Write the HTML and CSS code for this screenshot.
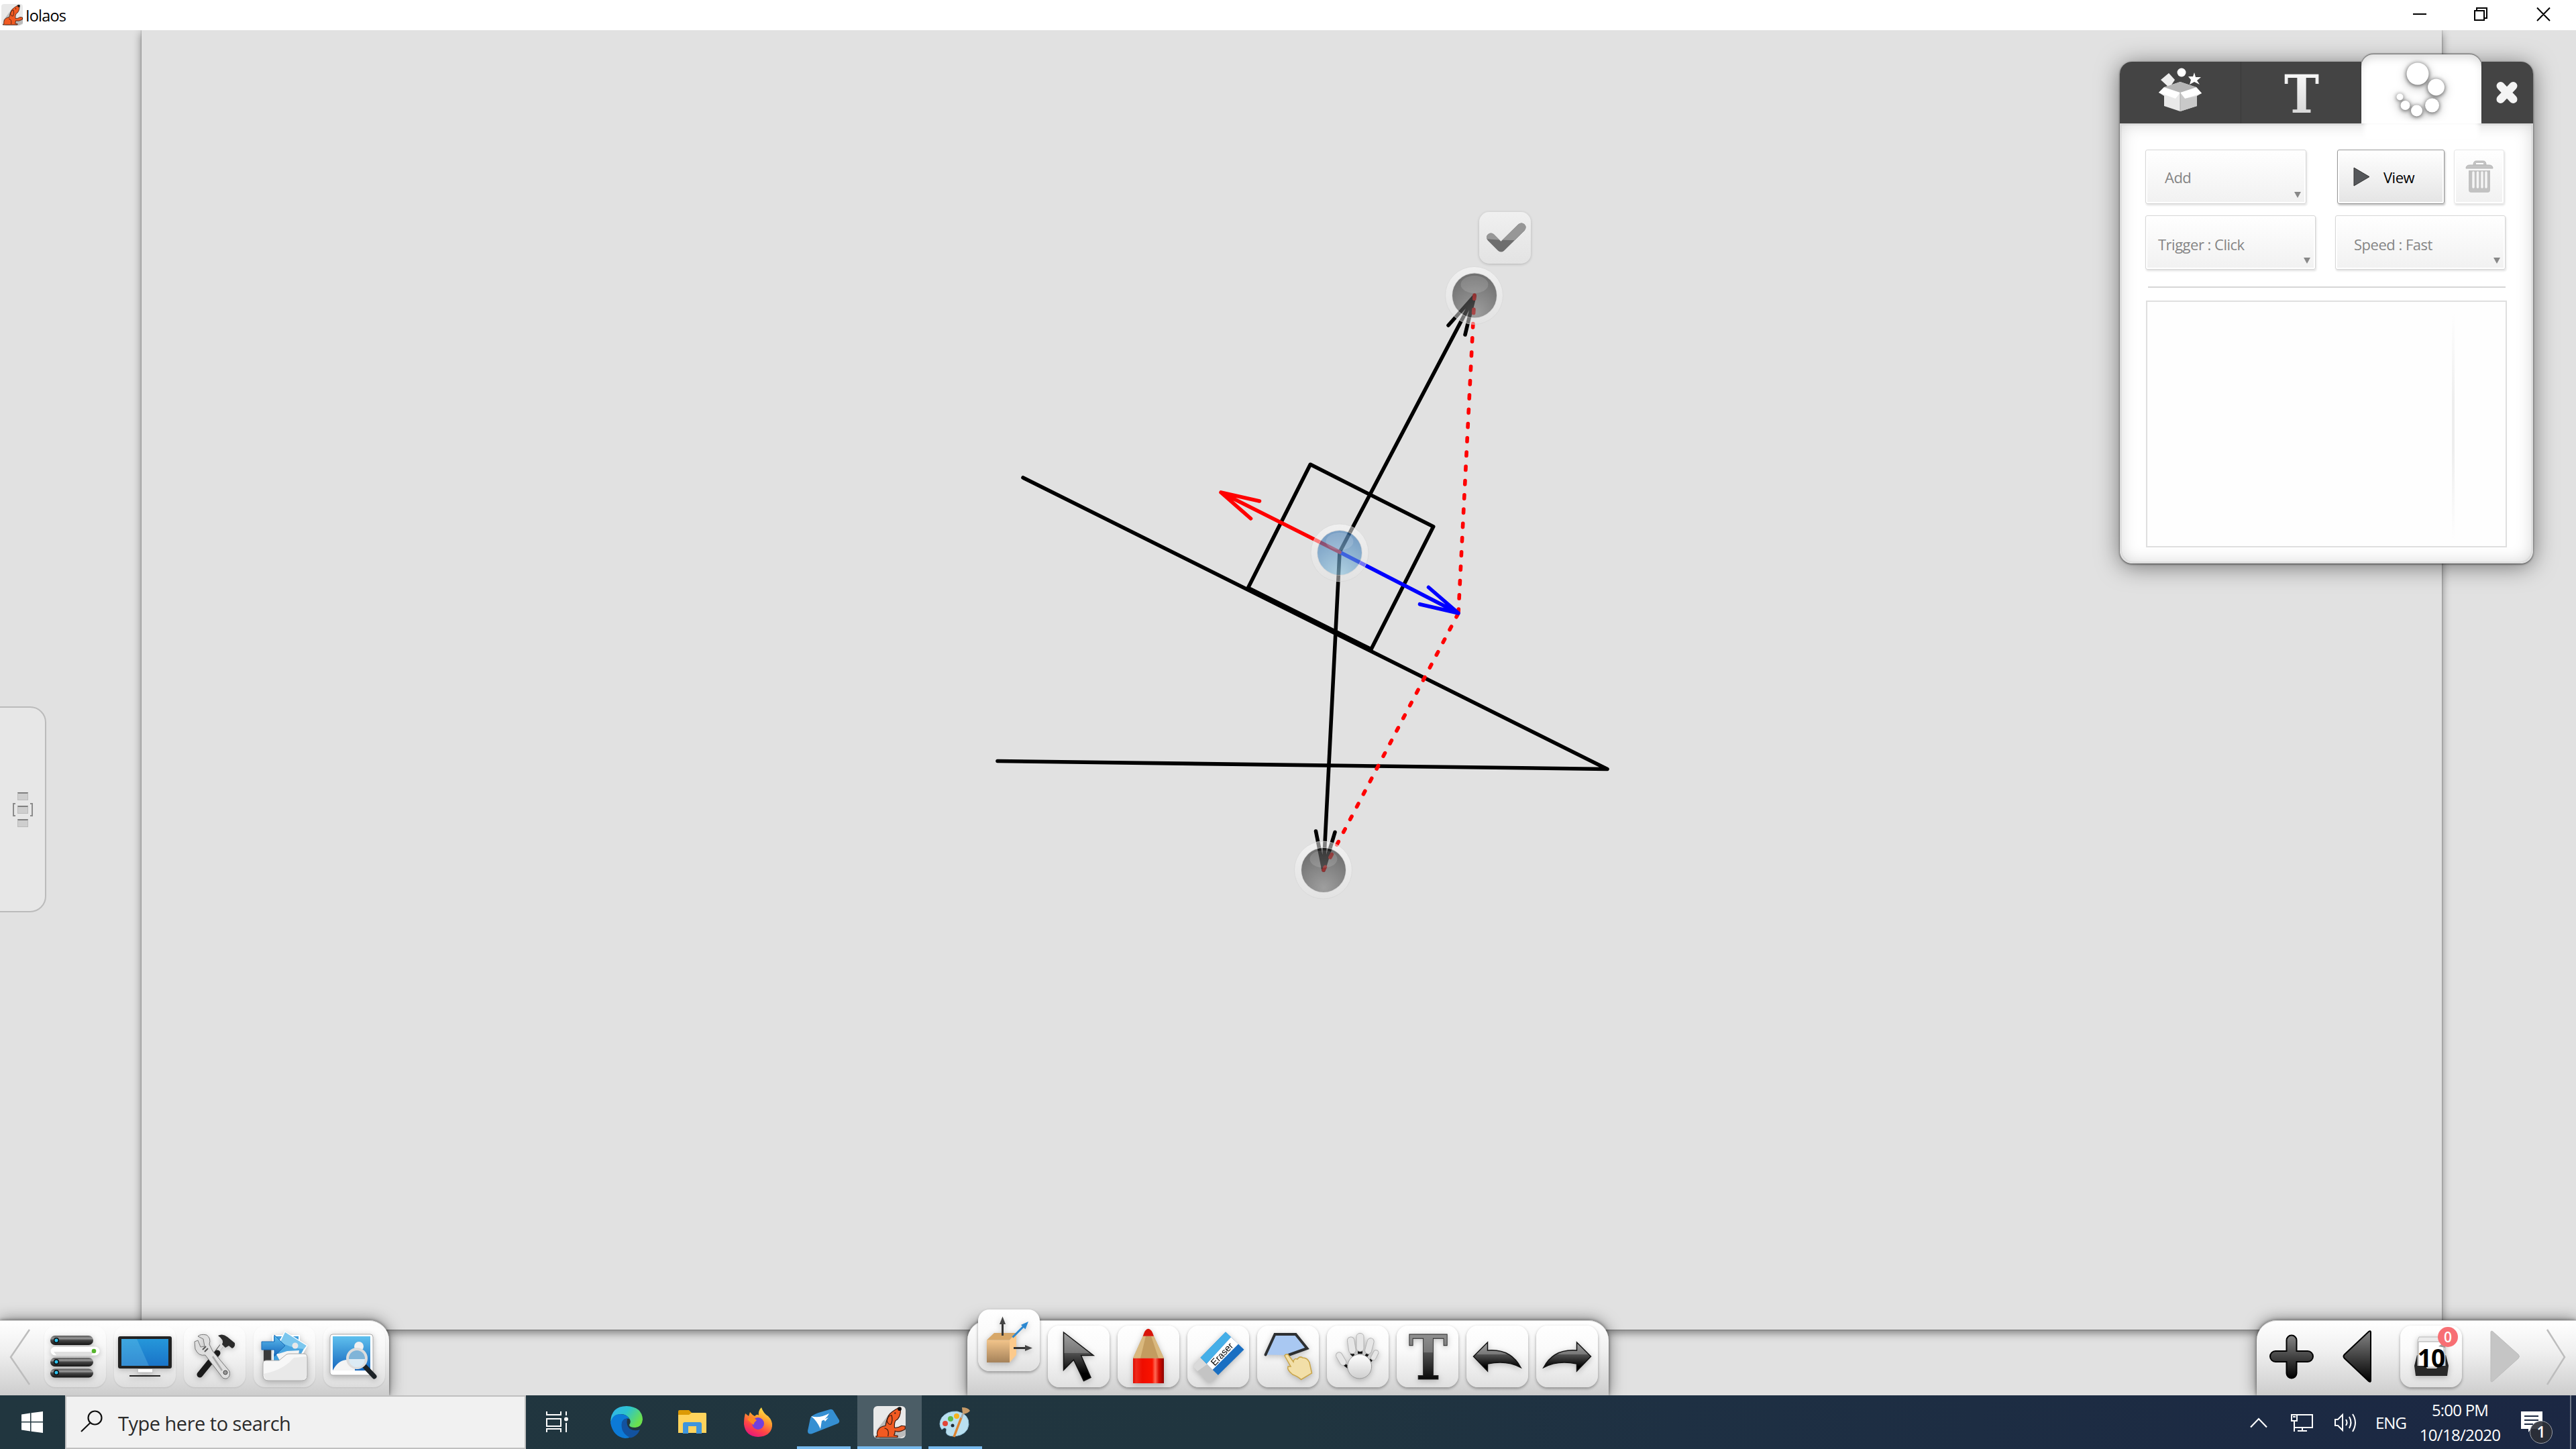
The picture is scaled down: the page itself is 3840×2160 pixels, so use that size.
FILE: index.html
```html
<!DOCTYPE html>
<html lang="en">
<head>
  <meta charset="UTF-8" />
  <title>Iolaos</title>
  <link rel="stylesheet" href="styles.css">
</head>
<body>
  <!-- shared gradients and symbols -->
  <svg class="defs" width="0" height="0">
    <defs>
      <linearGradient id="dark" x1="0" y1="0" x2="0" y2="1">
        <stop offset="0" stop-color="#858585" /><stop offset="1" stop-color="#000" />
      </linearGradient>
      <linearGradient id="gloss" x1="0" y1="0" x2="0" y2="1">
        <stop offset="0" stop-color="#a0a0a0" /><stop offset=".42" stop-color="#777" /><stop offset=".43" stop-color="#505050" /><stop offset=".85" stop-color="#000" />
      </linearGradient>
      <linearGradient id="bar" x1="0" y1="0" x2="0" y2="1">
        <stop offset="0" stop-color="#555" /><stop offset=".3" stop-color="#999" /><stop offset=".5" stop-color="#444" /><stop offset="1" stop-color="#151515" />
      </linearGradient>
      <linearGradient id="silver" x1="0" y1="0" x2="0" y2="1">
        <stop offset="0" stop-color="#fff" /><stop offset="1" stop-color="#cfcfcf" />
      </linearGradient>
      <linearGradient id="blue" x1="0" y1="0" x2="0" y2="1">
        <stop offset="0" stop-color="#5fc0ee" /><stop offset="1" stop-color="#1566bd" />
      </linearGradient>
      <linearGradient id="screen" x1="0" y1="0" x2="0" y2="1">
        <stop offset="0" stop-color="#2597da" /><stop offset="1" stop-color="#1a74c8" />
      </linearGradient>
      <linearGradient id="red" x1="0" y1="0" x2="1" y2="0">
        <stop offset="0" stop-color="#e00b00" /><stop offset=".1" stop-color="#ee2a1c" /><stop offset=".3" stop-color="#ee0d00" /><stop offset=".62" stop-color="#fa1300" /><stop offset=".72" stop-color="#ff6a55" /><stop offset=".84" stop-color="#d80a00" /><stop offset="1" stop-color="#8d0500" />
      </linearGradient>
      <linearGradient id="wood" x1="0" y1="0" x2="0" y2="1">
        <stop offset="0" stop-color="#f2c48a" /><stop offset="1" stop-color="#a5825a" />
      </linearGradient>
      <linearGradient id="ring" x1="0" y1="0" x2="0" y2="1">
        <stop offset="0" stop-color="#fff" stop-opacity=".5" /><stop offset="1" stop-color="#e4e4e4" stop-opacity=".5" />
      </linearGradient>
      <radialGradient id="knobGrey" cx=".5" cy=".9" r=".8">
        <stop offset="0" stop-color="#767676" /><stop offset="1" stop-color="#2e2e2e" />
      </radialGradient>
      <radialGradient id="knobBlue" cx=".5" cy="1" r=".9">
        <stop offset="0" stop-color="#92c8e2" /><stop offset="1" stop-color="#3b78b4" />
      </radialGradient>
      <linearGradient id="edgeTop" x1="0" y1="0" x2="1" y2=".5">
        <stop offset="0" stop-color="#35b1ee" /><stop offset=".5" stop-color="#2cc3cf" /><stop offset="1" stop-color="#6be04d" />
      </linearGradient>
      <linearGradient id="fox" x1=".8" y1="0" x2=".3" y2="1">
        <stop offset="0" stop-color="#fff04a" /><stop offset=".4" stop-color="#ff9a2e" /><stop offset=".7" stop-color="#ff4545" /><stop offset="1" stop-color="#e3157d" />
      </linearGradient>
      <symbol id="dog" viewBox="0 0 32 32">
        <rect width="32" height="32" rx="4" fill="#e9e9e9" />
        <path d="M3 24L17 6L12 19L28 25L32 21V29L26 32H6Z" fill="#bbb" />
        <path d="M2.500 31H24V29.500L20.500 29Q21.500 27 21.500 24.800Q26 26.500 31.500 23V20L28 19.500Q24 22 21 21.500Q20.500 17 22 14.500Q27 12 27 3.500L24.500 2Q17 6 15 9.500Q12.500 15 12 19.500Q6 20.500 4.500 24Q3 27 4 29.500L2.500 30Z" fill="#f15a22" stroke="#3a1a10" stroke-width=".8" />
        <path d="M18 9Q14 9.500 13.500 15Q15 19 17.500 18Q19.500 14 18 9M11 22Q16 22.500 14.500 30" fill="none" stroke="#3a1a10" stroke-width=".8" />
        <circle cx="26" cy="2.800" r="1.900" fill="#111" /><circle cx="21.500" cy="7" r=".7" fill="#111" />
      </symbol>
    </defs>
  </svg>

  <header class="titlebar">
    <svg class="app-icon" width="32" height="32"><use href="#dog" /></svg>
    <span class="app-name">Iolaos</span>
    <svg class="window-controls" width="250" height="45" viewBox="3590 0 250 45">
      <path d="M3597 21H3617M3692 15V12H3707V27H3703M3689 16H3703V30H3689ZM3782 11.500L3801 31M3801 11.500L3782 31" fill="none" stroke="#000" stroke-width="2" />
    </svg>
  </header>

  <main class="workspace">
    <div class="sheet"></div>

    <svg class="drawing" width="3840" height="2035" viewBox="0 45 3840 2035">
      <g class="ink">
        <path d="M1525 712L2396 1146.500L1487 1134.500" />
        <path d="M1953.300 692.300L2136.700 785L2044 967.800L1860.500 876.300Z" />
        <path d="M1997 823L2198 441M2159 485L2198 441L2184 499" />
        <path d="M1997 823L1973 1297M1961.500 1239L1973 1297L1990 1240.500" />
        <path class="dotted" d="M2198 440L2174 914" />
        <path class="dotted" d="M1973 1297L2174 914" />
        <path class="blue-arrow" d="M1997 823L2174 914M2129.500 875.500L2174 914L2116.500 900.700" />
        <path class="red-arrow" d="M1997 823L1820 734M1877.500 747L1820 734L1864.500 773" />
      </g>
      <g id="knob-top">
        <path d="M2154.500 440.500a43 43 0 1 0 86 0a43 43 0 1 0 -86 0ZM2164.500 440.500a33.500 33.500 0 1 1 67 0a33.500 33.500 0 1 1 -67 0Z" fill="url(#ring)" fill-rule="evenodd" stroke="#d6d6d6" stroke-width=".7" />
        <circle cx="2198" cy="440.500" r="33" fill="url(#knobGrey)" opacity=".62" />
        <ellipse cx="2198" cy="424" rx="20.500" ry="13" fill="#fff" opacity=".14" />
      </g>
      <use href="#knob-top" x="-225" y="856.500" />
      <path d="M1954 824a43 43 0 1 0 86 0a43 43 0 1 0 -86 0ZM1963.500 824a33.500 33.500 0 1 1 67 0a33.500 33.500 0 1 1 -67 0Z" fill="url(#ring)" fill-rule="evenodd" stroke="#d6d6d6" stroke-width=".7" />
      <circle cx="1997" cy="824" r="33" fill="url(#knobBlue)" opacity=".62" />
      <ellipse cx="1997" cy="807" rx="20.500" ry="13" fill="#fff" opacity=".14" />
    </svg>

    <div class="confirm">
      <svg width="77" height="77">
        <defs><clipPath id="checkTop"><path d="M0 0H77V42H46Q25 42 0 39Z" /></clipPath></defs>
        <path d="M17.500 38L32.500 53L63 23" fill="none" stroke="#6e6e6e" stroke-width="13" stroke-linecap="round" stroke-linejoin="round" />
        <path d="M17.500 38L32.500 53L63 23" fill="none" stroke="#979797" stroke-width="13" stroke-linecap="round" stroke-linejoin="round" clip-path="url(#checkTop)" />
      </svg>
    </div>

    <aside class="drawer">
      <span class="bracket bracket-left"></span>
      <div class="dots"><i></i><i></i><i></i></div>
      <span class="bracket bracket-right"></span>
    </aside>

    <section class="panel">
      <div class="tabs">
        <div class="tab">
          <svg width="180" height="92" viewBox="3160 92 180 92">
            <circle cx="3252" cy="108" r="6.500" fill="#fff" />
            <path d="M3233 109L3242 119L3234 131L3221 119Z" fill="#eee" />
            <path d="M3271 108L3273 115L3281 115L3275 120L3279 126L3271 122L3264 126L3266 119L3262 114L3269 114Z" fill="#fff" />
            <path d="M3250 122L3274 130L3282 139L3275 143V158L3250 166L3226 158V143L3218 138L3226 130Z" fill="#e9e9e9" />
            <path d="M3250 138L3274 130L3282 139L3257 147ZM3250 138L3226 130L3218 138L3243 147Z" fill="#fff" />
            <path d="M3226 130L3250 122L3274 130L3250 138Z" fill="#b5b5b5" />
            <path d="M3250 138L3257 147L3275 143V158L3250 166Z" fill="#c9c9c9" />
            <path d="M3250 138V166" stroke="#aaa" />
          </svg>
        </div>
        <div class="tab tab-text">
          <svg width="180" height="92" viewBox="3340 92 180 92">
            <text class="slab" x="3405" y="168" font-size="79" textLength="52" lengthAdjust="spacingAndGlyphs" fill="url(#silver)">T</text>
          </svg>
        </div>
        <div class="tab tab-active">
          <svg width="179" height="103" viewBox="3520 81 179 103" fill="#fff">
            <g class="bubbles">
              <circle cx="3604" cy="110" r="16.500" /><circle cx="3631.500" cy="130" r="12.500" /><circle cx="3625.500" cy="157" r="10.500" />
              <circle cx="3602.500" cy="165" r="8.500" /><circle cx="3585.500" cy="157" r="7" /><circle cx="3577.500" cy="144.500" r="5" />
            </g>
          </svg>
        </div>
        <div class="tab tab-close">
          <svg width="77" height="92" viewBox="3699 92 77 92">
            <path d="M3727.500 128L3746.500 148M3746.500 128L3727.500 148" stroke="#f4f4f4" stroke-width="12" stroke-linecap="round" />
          </svg>
        </div>
      </div>
      <div class="panel-body">
        <div class="row">
          <div class="button button-add disabled">Add<i class="caret"></i></div>
          <div class="button button-view">
            <svg width="26" height="30"><path d="M1 1L24 14.500L1 28Z" fill="#55575a" stroke="#333" /></svg>
            View
          </div>
          <div class="button button-trash disabled">
            <svg width="42" height="50" viewBox="0 0 42 50">
              <path d="M1 12Q1 7 7 7H35Q41 7 41 12ZM12 7Q12 1 16 1H27Q31 1 31 7" fill="#c4c4c4" stroke="#b5b5b5" />
              <path d="M16 6V4H27V6Z" fill="#fff" />
              <path d="M5 15H37V44Q37 48 33 48H9Q5 48 5 44Z" fill="#c2c2c2" />
              <path d="M12 18V40M18.500 18V40M25 18V40M31 18V40" stroke="#f5f5f5" stroke-width="3.500" stroke-linecap="round" />
            </svg>
          </div>
        </div>
        <div class="row">
          <div class="button button-trigger disabled">Trigger : Click<i class="caret"></i></div>
          <div class="button button-speed disabled">Speed : Fast<i class="caret"></i></div>
        </div>
        <div class="rule"></div>
        <div class="list"><span class="list-divider"></span></div>
      </div>
    </section>

    <nav class="toolbar toolbar-left">
      <svg class="chevron" width="32" height="92"><path d="M30 6L2 47L30 88" fill="none" stroke="#bdbdbd" stroke-width="2.500" /></svg>
      <div class="tile tile-flat">
        <svg width="92" height="92">
          <g fill="url(#bar)">
            <rect x="9" y="15" width="64" height="14" rx="7" /><rect x="9" y="48" width="64" height="13" rx="6.500" /><rect x="9" y="64.500" width="64" height="13" rx="6.500" />
          </g>
          <rect x="9.500" y="31.500" width="73" height="13" rx="6.500" fill="#fff" />
          <path d="M14 39H74L70 44H18Z" fill="#e0e0e0" />
          <g fill="#2fc4f0" stroke="#0a0a0a" stroke-width="1.500"><circle cx="18" cy="22" r="3.300" /><circle cx="18" cy="54" r="3.300" /><circle cx="18" cy="70" r="3.300" /></g>
          <circle cx="74" cy="38" r="3.300" fill="#56b52c" />
        </svg>
      </div>
      <div class="tile tile-flat">
        <svg width="92" height="92">
          <rect x="6" y="16" width="80" height="48" rx="3" fill="#222" />
          <rect x="11" y="20" width="70" height="40" fill="url(#screen)" />
          <path d="M11 20H34L52 60H11Z" fill="#7fd0f0" opacity=".28" />
          <path d="M36 65H57V70H36Z" fill="#fff" /><path d="M35 70H58" stroke="#bbb" />
          <path d="M23 75H69" stroke="#222" stroke-width="2" />
        </svg>
      </div>
      <div class="tile tile-flat">
        <svg width="92" height="92">
          <path d="M56 30L23 74" stroke="#4a4a4a" stroke-width="6" />
          <path d="M60 25L50 39" stroke="#ddd" stroke-width="5" />
          <path d="M50 41L24 73" stroke="#1a1a1a" stroke-width="9" stroke-linecap="round" />
          <path d="M51 15Q58 11 65 17L76 26Q77 32 72 34L67 30L62 33L57 28Q61 22 51 15Z" fill="#2b2b2b" />
          <path d="M21 16Q25 12 34 14Q41 19 38 28L43 38L68 68Q70 76 64 79Q58 80 55 74L32 44Q22 46 17 35L16 24L21 22L25 32L31 31L29 20Z" fill="#dedede" stroke="#777" />
          <path d="M28 36L33 31M31 39L36 34" stroke="#555" stroke-width="2" />
          <path d="M43 46L57 67" stroke="#aaa" stroke-width="2.500" />
          <circle cx="62" cy="70" r="3" fill="#999" stroke="#444" />
        </svg>
      </div>
      <div class="tile tile-flat">
        <svg width="92" height="92">
          <path d="M15 33H26V56H15Z" fill="#3a3a3a" />
          <path d="M29 15H68V54H29Z" fill="#3f9ddc" stroke="#fff" stroke-width="2" />
          <path d="M47 10L79 30L64 57L30 40Z" fill="#4aa6e0" stroke="#fff" stroke-width="2.500" />
          <path d="M47 10L79 30L75 35Q52 33 40 24Z" fill="#7cc7ee" />
          <circle cx="62" cy="30" r="4.500" fill="#e8e8e8" /><path d="M34 43L50 38L68 37L66 50L40 54Z" fill="#f4f4f4" />
          <path d="M12 24H31V14L47 30L31 46V36H12Z" fill="url(#blue)" stroke="#1a6cb8" />
          <path d="M14 57Q14 52 19 52H38L49 43Q51 42 54 42H75Q80 42 80 48V74Q80 82 72 82H22Q15 82 14 75Z" fill="#f7f7f7" stroke="#a9a9a9" />
          <path d="M15 72Q45 66 60 48L79 46V74Q79 81 72 81H22Q16 81 15 72Z" fill="#e9e9e9" />
        </svg>
      </div>
      <div class="tile tile-flat">
        <svg width="92" height="92">
          <rect x="10" y="13" width="64" height="61" rx="4" fill="#fff" stroke="#aaa" />
          <rect x="14" y="16" width="56" height="51" fill="url(#blue)" />
          <path d="M14 67Q22 51 36 51L47 56V67Z" fill="#f4f4f4" /><circle cx="53" cy="31" r="7" fill="#f1f1f1" /><path d="M46 40H60V48H46Z" fill="#e6e6e6" />
          <path d="M61 60L76 76" stroke="#1c2226" stroke-width="7" stroke-linecap="round" />
          <circle cx="50" cy="49" r="14" fill="#7fb4d8" stroke="#ddd" stroke-width="4" />
          <path d="M38 50H62A12 12 0 0 1 38 50" fill="#dcebf4" />
        </svg>
      </div>
    </nav>

    <nav class="toolbar toolbar-center">
      <div class="tile tile-raised">
        <svg width="92" height="92">
          <path d="M13 45.500H47V79H13Z" fill="url(#wood)" /><path d="M13 45.500L24 35H57L47 45.500Z" fill="#d7a768" /><path d="M47 45.500L57 35V68L47 79Z" fill="#fcca8c" />
          <path d="M36.500 39V20" stroke="#333" stroke-width="3" /><path d="M36.500 10.500L41 22H32Z" fill="#444" />
          <path d="M53 57.500H72" stroke="#333" stroke-width="3" /><path d="M81 57.500L70 53V62Z" fill="#444" />
          <path d="M51.500 41.500L69 24" stroke="#2b87d0" stroke-width="3" /><path d="M75 18L70.500 29.500L64 23Z" fill="#2b87d0" />
        </svg>
      </div>
      <div class="tile">
        <svg width="92" height="92"><path d="M23.500 10L68 44.500H49.500L64 77.500L53.500 82.500L38.500 51L23.500 66.500Z" fill="url(#gloss)" stroke="#111" stroke-width="1.500" /></svg>
      </div>
      <div class="tile">
        <svg width="92" height="92">
          <path d="M23 48.500H69V86H23Z" fill="url(#red)" />
          <path d="M37.700 15.700H54L69 48.500H23Z" fill="#c39c60" /><path d="M37.700 15.700L23 48.500H34L42 15.700ZM54 15.700L69 48.500H61L50 15.700Z" fill="#d9b87e" />
          <path d="M37.700 15.700Q41 4.700 45.700 4.700T54 15.700Z" fill="#d8140a" />
        </svg>
      </div>
      <div class="tile">
        <svg width="92" height="92">
          <path d="M57 9.500L84.500 35.700L45.700 74L19.300 48Z" fill="#1a6fc2" /><path d="M57 9.500L65 17.300L28.700 56.700L19.300 48Z" fill="#45afe8" />
          <path d="M65 17.300L76 27.500L37.500 66L28.700 57Z" fill="#fff" />
          <path d="M19.300 48L45.700 74L36 83.500Q33 86 30 83.500L10 63Q8 60.500 10 58Z" fill="#c4c4c4" /><path d="M19.300 48L29 58L15 68L10 63Q8 60.500 10 58Z" fill="#dadada" />
          <text class="eraser-label" x="0" y="4.500" font-size="14" textLength="41" transform="translate(37.500 57.500) rotate(-46)">Eraser</text>
        </svg>
      </div>
      <div class="tile">
        <svg width="92" height="92">
          <path d="M12.500 43.500L26.500 13H57.500L74.500 34L46.500 44Z" fill="#a9c8f2" />
          <path d="M12.500 43.500L26.500 13H57.500L74.500 34L46.500 44" fill="none" stroke="#2d2f31" stroke-width="4" stroke-linecap="round" />
          <path d="M41 45Q42 42 46 43L54 54Q55 48 60 50Q63 45 68 48Q75 48 78 55L81.500 71L65.500 80.500Q61 76 53 73Q44 66 46 61L50 61Z" fill="#f2dfa8" stroke="#c9a548" stroke-width="1.500" />
        </svg>
      </div>
      <div class="tile">
        <svg width="92" height="92" class="glove">
          <path d="M26 58L34 64M36 41L40 45M46 40H53M61 42L58 46M67 50L63 55" stroke="#111" stroke-width="4" />
          <g fill="#e6e6e6" stroke="#b3b3b3">
            <rect x="44" y="11.500" width="11" height="27" rx="5" />
            <rect x="31.500" y="17" width="10.500" height="25" rx="5" transform="rotate(-9 36.700 29.500)" />
            <rect x="58.500" y="18.500" width="10" height="24" rx="5" transform="rotate(15 63.500 30)" />
            <rect x="67.500" y="36" width="7.500" height="16" rx="3.700" transform="rotate(27 71 44)" />
            <rect x="16.500" y="39" width="9.500" height="21" rx="4.700" transform="rotate(-30 21.300 49.700)" />
            <circle cx="48.700" cy="61" r="18" fill="url(#silver)" stroke="#999" />
          </g>
        </svg>
      </div>
      <div class="tile">
        <svg width="92" height="92"><text class="slab" x="18" y="80" font-size="91" textLength="58" lengthAdjust="spacingAndGlyphs" fill="url(#gloss)" stroke="#222">T</text></svg>
      </div>
      <div class="tile">
        <svg width="92" height="92"><path d="M10.500 46L31.500 25V37Q66 34 81 62.500Q60 51 31.500 57V68Z" fill="url(#gloss)" stroke="#111" stroke-width="1.500" /></svg>
      </div>
      <div class="tile">
        <svg width="92" height="92"><path d="M81.500 46L60.500 25V37Q26 34 11 62.500Q32 51 60.500 57V68Z" fill="url(#gloss)" stroke="#111" stroke-width="1.500" /></svg>
      </div>
    </nav>

    <nav class="toolbar toolbar-right">
      <svg width="68" height="92"><path d="M26.500 22a7.500 7.500 0 0 1 15 0V38H58a8 8 0 0 1 0 16H41.500V71a7.500 7.500 0 0 1 -15 0V54H10a8 8 0 0 1 0 -16H26.500Z" fill="url(#dark)" stroke="#000" stroke-width="2" /></svg>
      <svg class="prev" width="48" height="92"><path d="M43 10V82Q43 85 40 83L4 49Q1 46 4 43L40 9Q43 7 43 10Z" fill="url(#dark)" stroke="#000" stroke-width="2" /></svg>
      <div class="tile tile-pages">
        <svg width="92" height="92">
          <path d="M25 44L31 46V60H21ZM68 44L62 46V60H72Z" fill="#222" />
          <path d="M28 17H62L67 23V64H26V22Z" fill="#ececec" stroke="#bbb" /><path d="M27 24H65V62H27Z" fill="#fff" stroke="#aaa" />
          <path d="M57 31L67 24V33Z" fill="#999" />
          <path d="M21 60H37L40 64H54L57 60H72L70 75H23Z" fill="#292929" />
        </svg>
        <span class="page-number">10</span>
        <span class="page-badge">0</span>
      </div>
      <svg class="next" width="48" height="92"><path d="M2 10V82Q2 85 5 83L43 49Q46 46 43 43L5 9Q2 7 2 10Z" fill="#c5c5c5" stroke="#bbb" /></svg>
      <svg class="chevron-end" width="32" height="92"><path d="M2 6L28 47L2 88" fill="none" stroke="#bdbdbd" stroke-width="2.500" /></svg>
    </nav>
  </main>

  <footer class="taskbar">
    <div class="start">
      <svg width="32" height="32"><path d="M0 4.500L13 2.500V15H0ZM14.500 2.300L32 0V15H14.500ZM0 16.500H13V29.500L0 27.500ZM14.500 16.500H32V32L14.500 29.700Z" fill="#fff" /></svg>
    </div>
    <div class="search">
      <svg width="34" height="34"><circle cx="22.500" cy="11.500" r="10" fill="none" stroke="#111" stroke-width="2.200" /><path d="M15.500 19L2 32" stroke="#111" stroke-width="2.200" /></svg>
      <span>Type here to search</span>
    </div>
    <div class="task task-view">
      <svg width="34" height="32"><path d="M1 0V5H22V0M1 31V26H22V31M1 11H22V22H1ZM30 0V6M30 17V31" fill="none" stroke="#fff" stroke-width="2" /><circle cx="30" cy="11.500" r="3" fill="#fff" /></svg>
    </div>
    <div class="task">
      <svg width="48" height="48">
        <path d="M0 24Q1 0 24 0Q47 1 48 20Q47 31 37 32Q28 32 28 28Q31 24 29 20Q24 11 14 12Q5 13 0 24Z" fill="url(#edgeTop)" />
        <path d="M0 25Q3 12 14 12Q25 12 28 19Q20 17 17 25Q16 38 30 46Q27 48 22 48Q4 46 0 25Z" fill="#0c7ad6" />
        <path d="M17 24Q20 18 25 19Q23 29 29 34Q36 38 44 35Q40 45 30 47.500Q14 40 17 24Z" fill="#12529f" />
      </svg>
    </div>
    <div class="task">
      <svg width="42" height="36"><path d="M0 2Q0 0 2 0H16L20 4H40Q42 4 42 6V34H0Z" fill="#dc9a05" /><path d="M0 7H16L20 4H40Q42 4 42 6V34H0Z" fill="#ffd35c" /><path d="M7 35V21Q7 18 10 18H32Q35 18 35 21V35H27V24H15V35Z" fill="#3f95dc" /></svg>
    </div>
    <div class="task">
      <svg width="42" height="44">
        <path d="M2 9L7 13L9 7Q12 11 16 13Q20 9 22 12Q21 5 26 0Q29 9 36 13Q43 20 42 28Q40 43 21 44Q2 43 0 25Q0 15 2 9Z" fill="url(#fox)" />
        <circle cx="21" cy="24" r="9" fill="#7340dc" /><path d="M5 18Q10 11 19 19Q15 22 14 26Z" fill="#ff8a1f" />
      </svg>
    </div>
    <div class="task running">
      <svg width="50" height="40"><path d="M17 6L34 1Q38 0 40 4L48 17Q49 20 46 22L8 37Q1 39 1 33L5 14Q6 10 17 6Z" fill="#358fd2" /><path d="M6 11Q18 15 33 7Q28 16 22 18L20 30Q15 18 6 11ZM25 16L32 13L27 19Z" fill="#fff" /></svg>
    </div>
    <div class="task running active"><svg width="48" height="48"><use href="#dog" /></svg></div>
    <div class="task running">
      <svg width="48" height="46">
        <path d="M4 16Q12 6 27 7Q45 11 44 27Q42 42 23 44Q7 44 11 34Q9 29 4 34Q-2 26 4 16Z" fill="#b9dff0" stroke="#8dbcd4" />
        <circle cx="17" cy="18" r="4" fill="#5db848" /><circle cx="26" cy="14" r="4" fill="#f6b31e" /><circle cx="9" cy="25" r="4" fill="#e14538" /><circle cx="20" cy="28" r="2.500" fill="#1d2b36" />
        <path d="M22 45L33 16" stroke="#dc8330" stroke-width="3.500" /><path d="M33 17L36 9" stroke="#aaa" stroke-width="3" /><path d="M34 1Q43 1 46 6Q43 10 36 11Q34 7 34 1Z" fill="#c69a68" />
      </svg>
    </div>

    <div class="tray">
      <svg class="tray-up" width="26" height="16"><path d="M1 14.500L13 2L25 14.500" fill="none" stroke="#fff" stroke-width="2.200" /></svg>
      <svg class="tray-net" width="34" height="28"><path d="M9 2H32V21H6M1 2H9V11H1ZM3 5H7M5 11V27M10 26H24M17 21V26" fill="none" stroke="#fff" stroke-width="2" /></svg>
      <svg class="tray-vol" width="34" height="30"><path d="M1 10H5L12 3V26L5 19H1ZM17 10Q20 14.500 17 19M22 6Q27 14.500 22 23M27 2Q35 14.500 27 28" fill="none" stroke="#fff" stroke-width="2" /></svg>
      <span class="tray-lang">ENG</span>
      <div class="clock"><span class="time">5:00 PM</span><span class="date">10/18/2020</span></div>
      <div class="notifications">
        <svg width="32" height="33"><path d="M0 0H32V26H15L11 31V26H0Z" fill="#fff" /><path d="M5 7H26M5 13H26M5 19H18" stroke="#1b2841" stroke-width="2" /></svg>
        <span class="notification-count">1</span>
      </div>
      <span class="show-desktop"></span>
    </div>
  </footer>
</body>
</html>
```
FILE: styles.css
```css
* {
  box-sizing: border-box;
}
body {
  margin: 0;
  width: 3840px;
  height: 2160px;
  display: flex;
  flex-direction: column;
  overflow: hidden;
  background: #e1e1e1;
  font-family: "Open Sans", "Noto Sans", sans-serif;
}
svg {
  display: block;
  flex: none;
  overflow: visible;
}
.defs {
  position: absolute;
}

/* title bar */
.titlebar {
  height: 45px;
  background: #fff;
  display: flex;
  align-items: flex-start;
  padding: 0 0 0 2px;
}
.app-icon {
  margin-top: 6px;
}
.app-name {
  margin-left: 4px;
  font-size: 23.5px;
  line-height: 46px;
  letter-spacing: -0.8px;
}
.window-controls {
  margin-left: auto;
}

/* workspace */
.workspace {
  flex: 1;
  position: relative;
  overflow: hidden;
}
.sheet {
  height: 1937px;
  margin: 0 200px 0 211px;
  background: #e1e1e1;
  box-shadow: 0 0 2px rgba(0, 0, 0, 0.4), 0 5px 12px rgba(0, 0, 0, 0.45);
}
.drawing {
  position: absolute;
  left: 0;
  top: 0;
}
.ink {
  fill: none;
  stroke: #000;
  stroke-width: 5.6;
  stroke-linecap: round;
  stroke-linejoin: round;
}
.dotted {
  stroke: #f00;
  stroke-dasharray: 5.3 16;
}
.blue-arrow {
  stroke: #00f;
}
.red-arrow {
  stroke: #f00;
}
.confirm {
  position: absolute;
  left: 2205px;
  top: 271px;
  width: 77px;
  height: 77px;
  border-radius: 15px;
  background: linear-gradient(#f0f0f0, #e3e3e3);
  box-shadow: 0 1px 4px rgba(0, 0, 0, 0.2);
}

/* left drawer handle */
.drawer {
  position: absolute;
  left: -2px;
  top: 1008px;
  width: 71px;
  height: 307px;
  padding: 0 18px 0 19px;
  display: flex;
  align-items: center;
  justify-content: space-between;
  background: #e7e7e7;
  border: 2px solid #bbb;
  border-radius: 0 24px 24px 0;
}
.dots {
  display: flex;
  flex-direction: column;
  gap: 8px;
}
.dots i {
  width: 16px;
  height: 12px;
  background: #cecece;
  border: 1px solid #bbb;
  border-top: 2px solid #808080;
}
.bracket {
  width: 4px;
  height: 20px;
  border: 2px solid #8c8c8c;
}
.bracket-left {
  border-right: 0;
}
.bracket-right {
  border-left: 0;
}

/* floating panel */
.panel {
  position: absolute;
  left: 3160px;
  top: 36px;
  width: 616px;
  height: 759px;
  display: flex;
  flex-direction: column;
}
.panel::before {
  content: "";
  position: absolute;
  inset: 11px 0 0;
  border-radius: 18px;
  box-shadow: 0 1px 3px rgba(0, 0, 0, 0.6), 0 4px 34px rgba(0, 0, 0, 0.5);
}
.tabs {
  position: relative;
  height: 103px;
  display: flex;
  align-items: flex-end;
}
.tab {
  width: 180px;
  height: 92px;
  background: #444;
}
.tab:first-child {
  border-radius: 18px 0 0 0;
}
.tab-text {
  box-shadow: inset 1px 0 #3a3a3a;
}
.tab-active {
  position: relative;
  z-index: 1;
  width: 179px;
  height: 103px;
  background: #fff;
  border-radius: 18px 18px 0 0;
  box-shadow: 0 -1px 2px rgba(0, 0, 0, 0.6), inset 0 8px 14px -4px rgba(0, 0, 0, 0.16);
}
.tab-active::after {
  content: "";
  position: absolute;
  left: 4px;
  right: 4px;
  top: 100px;
  height: 26px;
  background: #fff;
  filter: blur(3px);
}
.bubbles {
  filter: drop-shadow(0 1px 3px rgba(0, 0, 0, 0.6)) drop-shadow(0 3px 7px rgba(0, 0, 0, 0.3));
}
.tab-close {
  width: 77px;
  border-radius: 0 18px 0 0;
}
.slab {
  font-family: "DejaVu Serif", serif;
  font-weight: bold;
}
.panel-body {
  position: relative;
  flex: 1;
  padding: 38px 37px 0;
  background: #fff;
  border: 1px solid #ddd;
  border-radius: 0 0 20px 20px;
  box-shadow: inset 0 0 24px rgba(0, 0, 0, 0.17), inset 0 0 0 2px #f4f4f4;
}
.row {
  display: flex;
  margin-bottom: 17px;
}
.button {
  position: relative;
  height: 81px;
  display: flex;
  align-items: center;
  border: 1px solid #999;
  border-radius: 3px;
  background: linear-gradient(#fff, #e4e4e4);
  box-shadow: inset 0 0 0 2px #fff, 1px 2px 3px rgba(0, 0, 0, 0.25);
  font-size: 22px;
  letter-spacing: -0.5px;
  color: #000;
}
.disabled {
  background: linear-gradient(#fff, #f1f1f1);
  border-color: #d6d6d6;
  box-shadow: inset 0 0 0 2px #fff, 1px 2px 3px rgba(0, 0, 0, 0.12);
  color: #858585;
}
.button-add {
  width: 240px;
  padding-left: 28px;
}
.button-view {
  width: 160px;
  margin-left: 46px;
  padding-left: 23px;
  gap: 19px;
}
.button-trash {
  width: 75px;
  margin-left: 14px;
  justify-content: center;
  border-color: #e6e6e6;
}
.button-trigger {
  width: 254px;
  padding: 5px 0 0 18px;
}
.button-speed {
  width: 254px;
  margin-left: 29px;
  padding: 5px 0 0 27px;
}
.caret {
  position: absolute;
  right: 7px;
  bottom: 8px;
  border: 5px solid transparent;
  border-top: 9px solid #888;
  border-bottom: 0;
}
.rule {
  height: 2px;
  margin: 25px 3px 19px 4px;
  background: #d6d6d6;
}
.list {
  width: 538px;
  height: 368px;
  margin-left: 1px;
  padding: 17px 76px 0;
  display: flex;
  justify-content: flex-end;
  border: 2px solid #dfdfdf;
  background: #fefefe;
}
.list-divider {
  width: 4px;
  height: 338px;
  background: linear-gradient(transparent, #eee 40%, #eee 60%, transparent);
}

/* toolbars */
.toolbar {
  position: absolute;
  top: 1923px;
  height: 112px;
  padding: 7px 0;
  display: flex;
  background: linear-gradient(#fff, #f0f0f0 40%, #cdcdcd);
  border-top: 1px solid #c8c8c8;
  box-shadow: 0 0 5px rgba(0, 0, 0, 0.5), 0 0 22px rgba(0, 0, 0, 0.5);
}
.toolbar-left {
  left: 0;
  width: 580px;
  padding-left: 14px;
  gap: 12px;
  border-radius: 0 30px 0 0;
}
.toolbar-center {
  left: 1442px;
  width: 956px;
  padding-left: 16px;
  gap: 12px;
  border-radius: 30px 30px 0 0;
}
.toolbar-right {
  left: 3364px;
  width: 476px;
  padding-left: 18px;
  border-radius: 30px 0 0 0;
}
.chevron {
  margin-right: 8px;
}
.tile {
  position: relative;
  flex: none;
  width: 92px;
  height: 92px;
  border-radius: 17px;
  background: linear-gradient(#fff, #fafafa 40%, #e0e0e0);
  box-shadow: 0 2px 4px rgba(0, 0, 0, 0.35);
}
.tile svg {
  filter: drop-shadow(0 2px 4px rgba(0, 0, 0, 0.25));
}
.tile-flat {
  background: linear-gradient(rgba(255, 255, 255, 0.5), rgba(255, 255, 255, 0.2));
  box-shadow: 0 1px 2px rgba(0, 0, 0, 0.1);
}
.tile-raised {
  margin-top: -24px;
}
.eraser-label {
  font-family: "Liberation Sans", sans-serif;
}
.prev {
  margin-left: 41px;
}
.tile-pages {
  margin-left: 39px;
}
.next {
  margin-left: 41px;
}
.chevron-end {
  margin-left: 36px;
}
.page-number {
  position: absolute;
  left: 23px;
  top: 22px;
  width: 46px;
  text-align: center;
  font-size: 37px;
  line-height: 52px;
  font-weight: bold;
  letter-spacing: -1px;
}
.page-badge {
  position: absolute;
  left: 56px;
  top: 2px;
  width: 30px;
  height: 30px;
  border-radius: 50%;
  background: #f76f74;
  color: #fff;
  text-align: center;
  font-size: 21px;
  font-weight: 600;
  line-height: 31px;
}

/* taskbar */
.taskbar {
  height: 80px;
  display: flex;
  background: linear-gradient(90deg, #21363f, #20353f 50%, #1e3043 65%, #1b2743);
}
.start {
  width: 97px;
  padding: 24px 32px;
}
.search {
  width: 687px;
  display: flex;
  align-items: center;
  gap: 23px;
  padding: 0 0 2px 20px;
  background: #f1f1f1;
  border: 2px solid #bfbfbf;
  font-size: 29px;
  letter-spacing: -0.5px;
  color: #2b2b2b;
}
.search span {
  padding-top: 5px;
}
.task {
  position: relative;
  width: 80px;
  margin-right: 18px;
  display: flex;
  align-items: center;
  justify-content: center;
}
.task-view {
  margin: 0 23px 0 7px;
}
.running {
  border-bottom: 4px solid #76b9ed;
  border-top: 4px solid transparent;
  margin-right: 10px;
}
.active {
  width: 96px;
  background: #4b5d66;
  border-top-color: #4b5d66;
}
.tray {
  margin-left: auto;
  display: flex;
  align-items: flex-start;
  color: #fff;
  font-size: 24px;
}
.tray-up {
  margin: 33px 35px 0 0;
}
.tray-net {
  margin: 27px 31px 0 0;
}
.tray-vol {
  margin: 26px 27px 0 0;
}
.tray-lang {
  width: 66px;
  line-height: 82px;
  letter-spacing: -1px;
}
.clock {
  width: 120px;
  display: flex;
  flex-direction: column;
  align-items: center;
  padding-top: 3px;
  line-height: 37px;
  white-space: nowrap;
}
.time {
  letter-spacing: -0.8px;
}
.date {
  letter-spacing: -0.7px;
}
.notifications {
  position: relative;
  width: 32px;
  margin: 24px 41px 0 31px;
}
.notification-count {
  position: absolute;
  left: 13px;
  top: 14px;
  width: 34px;
  height: 34px;
  border: 1.5px solid #9a9ea6;
  border-radius: 50%;
  background: rgba(44, 47, 54, 0.9);
  text-align: center;
  font-size: 23px;
  font-weight: 600;
  line-height: 31px;
}
.show-desktop {
  width: 9px;
  height: 80px;
  border-left: 2px solid #6d7686;
}
```
